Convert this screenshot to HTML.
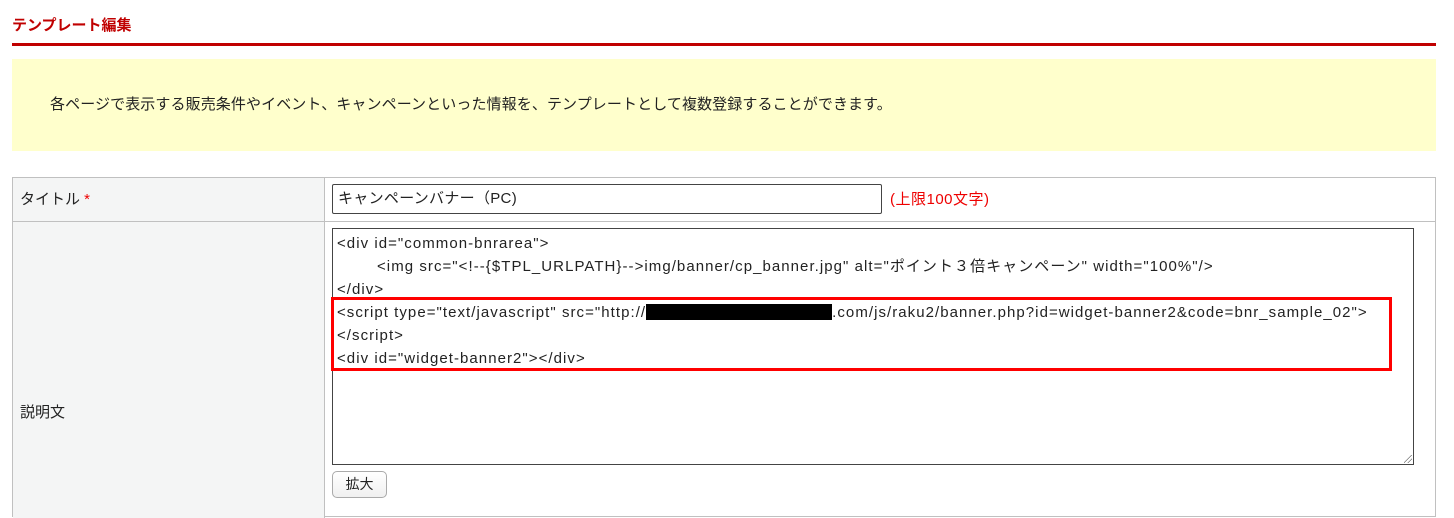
<!DOCTYPE html>
<html><head><meta charset="utf-8"><style>
*{margin:0;padding:0;box-sizing:border-box}
body{width:1454px;height:508px;background:#fff;font-family:"Liberation Sans","Noto Sans CJK JP",sans-serif;font-size:15px;color:#222;position:relative;overflow:hidden}
.a{position:absolute;white-space:nowrap}
</style></head><body>
<div class="a" style="left:12px;top:16px;color:#c00000;font-weight:bold;font-size:15px;line-height:20px">テンプレート編集</div>
<div class="a" style="left:12px;top:43px;width:1424px;height:3px;background:#c00000"></div>
<div class="a" style="left:12px;top:59px;width:1424px;height:92px;background:#ffffcc"></div>
<div class="a" style="left:50px;top:95px;line-height:20px;letter-spacing:0.1px">各ページで表示する販売条件やイベント、キャンペーンといった情報を、テンプレートとして複数登録することができます。</div>
<div class="a" style="left:12px;top:177px;width:1424px;height:340px;border:1px solid #c0c0c0"></div>
<div class="a" style="left:13px;top:178px;width:312px;height:340px;background:#f4f5f5;border-right:1px solid #c0c0c0"></div>
<div class="a" style="left:13px;top:221px;width:1422px;height:1px;background:#c0c0c0"></div>
<div class="a" style="left:20px;top:190px;line-height:20px">タイトル <span style="color:#e00">*</span></div>
<div class="a" style="left:20px;top:403px;line-height:20px">説明文</div>
<div class="a" style="left:332px;top:184px;width:550px;height:30px;border:1px solid #444;border-radius:2px"></div>
<div class="a" style="left:338px;top:189px;line-height:20px;letter-spacing:0.3px">キャンペーンバナー（PC)</div>
<div class="a" style="left:890px;top:190px;line-height:20px;color:#e00;letter-spacing:0.5px">(上限100文字)</div>
<div class="a" style="left:332px;top:228px;width:1082px;height:237px;border:1px solid #444"></div>
<div class="a" style="left:1404px;top:455px;width:8px;height:8px;background:linear-gradient(135deg,transparent 45%,#777 45%,#777 52%,transparent 52%,transparent 70%,#777 70%,#777 77%,transparent 77%)"></div>
<div class="a" style="left:337px;top:232px;line-height:23px;letter-spacing:1.05px">&lt;div id="common-bnrarea"&gt;<br><span style="padding-left:40px">&lt;img src="&lt;!--{$TPL_URLPATH}--&gt;img/banner/cp_banner.jpg" alt="ポイント３倍キャンペーン" width="100%"/&gt;</span><br>&lt;/div&gt;<br>&lt;script type="text/javascript" src="http://<span style="display:inline-block;width:186px;height:16px;background:#000;vertical-align:-3px"></span>.com/js/raku2/banner.php?id=widget-banner2&amp;code=bnr_sample_02"&gt;<br>&lt;/script&gt;<br>&lt;div id="widget-banner2"&gt;&lt;/div&gt;</div>
<div class="a" style="left:331px;top:297px;width:1061px;height:74px;border:3px solid #f00"></div>
<div class="a" style="left:332px;top:471px;width:55px;height:27px;border:1px solid #aaa;border-radius:5px;background:linear-gradient(#fff,#f0f0f0);text-align:center;line-height:24px;font-size:14px">拡大</div>
</body></html>
